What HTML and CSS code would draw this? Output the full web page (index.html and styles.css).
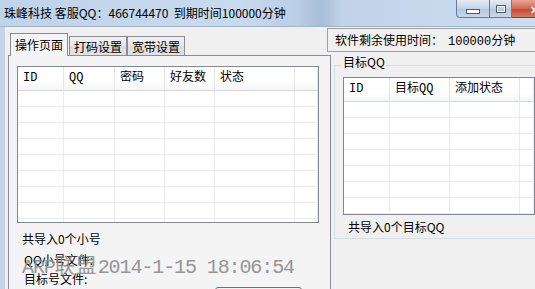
FILE: index.html
```html
<!DOCTYPE html>
<html lang="zh-CN">
<head>
    <meta charset="UTF-8">
    <title>珠峰科技</title>
    <link rel="stylesheet" href="styles.css">
</head>
<body>
    <div class="window">
        <div class="titlebar">
            <span class="title">珠峰科技 客服QQ：466744470&nbsp; 到期时间100000分钟</span>
            <div class="caption">
                <div class="cap-btn cap-min"><span class="glyph-min"></span></div>
                <div class="cap-btn cap-max"><span class="glyph-max"></span></div>
                <div class="cap-btn cap-close">✕</div>
            </div>
        </div>

        <div class="client">
            <div class="tabs-col">
                <div class="tabstrip">
                    <div class="tab active">操作页面</div>
                    <div class="tab">打码设置</div>
                    <div class="tab">宽带设置</div>
                </div>
                <div class="panel">
                    <div class="list list-main">
                        <table>
                            <colgroup>
                                <col style="width: 46px">
                                <col style="width: 51px">
                                <col style="width: 50px">
                                <col style="width: 50px">
                                <col style="width: 80px">
                                <col>
                            </colgroup>
                            <tr><th>ID</th><th>QQ</th><th>密码</th><th>好友数</th><th>状态</th><th></th></tr>
                            <tr><td></td><td></td><td></td><td></td><td></td><td></td></tr>
                            <tr><td></td><td></td><td></td><td></td><td></td><td></td></tr>
                            <tr><td></td><td></td><td></td><td></td><td></td><td></td></tr>
                            <tr><td></td><td></td><td></td><td></td><td></td><td></td></tr>
                            <tr><td></td><td></td><td></td><td></td><td></td><td></td></tr>
                            <tr><td></td><td></td><td></td><td></td><td></td><td></td></tr>
                            <tr><td></td><td></td><td></td><td></td><td></td><td></td></tr>
                            <tr><td></td><td></td><td></td><td></td><td></td><td></td></tr>
                            <tr><td></td><td></td><td></td><td></td><td></td><td></td></tr>
                        </table>
                    </div>
                    <div class="count-label">共导入0个小号</div>
                    <div class="file-label file-qq">QQ小号文件:</div>
                    <div class="file-label file-target">目标号文件:</div>
                    <div class="btn-row"><div class="btn"></div></div>
                </div>
            </div>

            <div class="side-col">
                <div class="timebox">软件剩余使用时间：<span class="time-val">100000分钟</span></div>
                <fieldset class="group">
                    <legend>目标QQ</legend>
                    <div class="list list-target">
                        <table>
                            <colgroup>
                                <col style="width: 46px">
                                <col style="width: 60px">
                                <col style="width: 70px">
                                <col>
                            </colgroup>
                            <tr><th>ID</th><th>目标QQ</th><th>添加状态</th><th></th></tr>
                            <tr><td></td><td></td><td></td><td></td></tr>
                            <tr><td></td><td></td><td></td><td></td></tr>
                            <tr><td></td><td></td><td></td><td></td></tr>
                            <tr><td></td><td></td><td></td><td></td></tr>
                            <tr><td></td><td></td><td></td><td></td></tr>
                            <tr><td></td><td></td><td></td><td></td></tr>
                            <tr><td></td><td></td><td></td><td></td></tr>
                            <tr><td></td><td></td><td></td><td></td></tr>
                        </table>
                    </div>
                    <div class="target-count">共导入0个目标QQ</div>
                </fieldset>
            </div>
        </div>

        <div class="watermark">ARP<span class="wm-cn">联盟</span>2014-1-15 18:06:54</div>
    </div>
</body>
</html>
```

FILE: styles.css
```css
body {
    margin: 0;
    background-color: #f0f0f0;
}
.window {
    position: relative;
    width: 535px;
    height: 289px;
    overflow: hidden;
    background-color: #f0f0f0;
    font-family: "Noto Sans CJK SC", sans-serif;
    font-size: 12px;
    color: #000;
}
.titlebar {
    display: flex;
    height: 26px;
    border-bottom: 1px solid #9fb3c9;
    background: linear-gradient(90deg, #bfd3e9 0%, #c8daee 45%, #b9cde4 56%, #a6bdd8 60%, #c0d3e9 64%, #cddef0 100%);
}
.title {
    padding-left: 4px;
    line-height: 26px;
    white-space: nowrap;
}
.caption {
    display: flex;
    align-self: flex-start;
    margin-left: auto;
    margin-right: -22px;
}
.cap-btn {
    height: 17px;
    border: 1px solid #6a7c93;
    border-top: none;
    display: flex;
    align-items: center;
    justify-content: center;
}
.cap-min {
    width: 32px;
    border-radius: 0 0 0 4px;
    background: linear-gradient(#e3ebf4, #c4d3e4 50%, #b2c5db 51%, #c9d8e9);
}
.cap-max {
    width: 21px;
    border-left: none;
    background: linear-gradient(#e3ebf4, #c4d3e4 50%, #b2c5db 51%, #c9d8e9);
}
.cap-close {
    width: 44px;
    border-left: none;
    border-color: #8a3b32;
    background: linear-gradient(#e8a493, #d5664f 50%, #c44530 51%, #d87a60);
    color: #fff;
    font-size: 11px;
    font-weight: bold;
}
.glyph-min {
    width: 12px;
    height: 3px;
    margin-top: 5px;
    background-color: #fff;
    border: 1px solid #4d5d72;
}
.glyph-max {
    width: 8px;
    height: 6px;
    border: 1px solid #4d5d72;
    box-shadow: inset 0 0 0 1px #fff;
}
.client {
    display: flex;
    height: 262px;
    border-left: 5px solid #c2d5e9;
    padding-left: 3px;
}
.tabs-col {
    display: flex;
    flex-direction: column;
    flex-shrink: 0;
    width: 323px;
    padding-top: 6px;
}
.tabstrip {
    display: flex;
    align-items: flex-end;
    height: 22px;
    padding-left: 2px;
    position: relative;
    z-index: 1;
}
.tab {
    height: 19px;
    padding: 0 4px;
    line-height: 19px;
    border: 1px solid #898c95;
    border-bottom: none;
    box-sizing: border-box;
    background: linear-gradient(#f2f2f2, #e6e6e6 50%, #dcdcdc 51%, #e2e2e2);
    white-space: nowrap;
}
.tab.active {
    height: 23px;
    line-height: 22px;
    margin-bottom: -1px;
    margin-right: 1px;
    background: #f4f4f4;
}
.panel {
    flex: 1;
    border: 1px solid #898c95;
    background-color: #f4f4f4;
    padding: 10px 11px 0 8px;
}
.list {
    border: 1px solid #828790;
    background-color: #fff;
    overflow: hidden;
    box-sizing: border-box;
}
.list-main {
    height: 157px;
}
.list-target {
    height: 138px;
    margin-top: 3px;
}
.list table {
    width: 100%;
    table-layout: fixed;
    border-collapse: separate;
    border-spacing: 0;
}
.list th {
    height: 24px;
    padding: 0 0 0 5px;
    box-sizing: border-box;
    text-align: left;
    font-weight: normal;
    font-family: "Liberation Mono", "Noto Sans CJK SC", monospace;
    font-size: 12px;
    line-height: 23px;
    border-right: 1px solid #e5e5e5;
    border-bottom: 1px solid #d5d5d5;
    background: linear-gradient(#fff, #fff 60%, #f5f6f7);
    white-space: nowrap;
    overflow: hidden;
}
.list td {
    height: 16px;
    padding: 0;
    box-sizing: border-box;
    line-height: 15px;
    border-right: 1px solid #ececec;
    border-bottom: 1px solid #ececec;
}
.count-label {
    margin-top: 8px;
    padding-left: 5px;
    line-height: 16px;
}
.file-label {
    padding-left: 7px;
    line-height: 16px;
}
.file-qq {
    margin-top: 5px;
}
.file-target {
    margin-top: 3px;
}
.btn-row {
    padding-left: 198px;
}
.btn {
    width: 85px;
    height: 22px;
    border: 1px solid #707070;
    border-radius: 3px;
    background: linear-gradient(#f2f2f2, #ebebeb 50%, #dddddd 51%, #cfcfcf);
}
.side-col {
    flex: 1;
    min-width: 0;
    margin-left: -4px;
    padding-top: 1px;
}
.timebox {
    height: 24px;
    box-sizing: border-box;
    border: 1px solid #a0a0a0;
    border-right: none;
    padding-left: 7px;
    line-height: 22px;
    white-space: nowrap;
}
.time-val {
    margin-left: 5px;
    font-family: "Liberation Mono", "Noto Sans CJK SC", monospace;
}
.group {
    margin: 4px 0 0 7px;
    padding: 0 0 5px 8px;
    border: 1px solid #d5dfe5;
    border-right: none;
    min-width: 0;
}
.group legend {
    padding: 0 1px 6px 1px;
    margin-left: -1px;
    line-height: 12px;
    font-family: "Noto Sans CJK SC", sans-serif;
}
.target-count {
    margin-top: 6px;
    padding-left: 5px;
    line-height: 12px;
}
.watermark {
    position: absolute;
    left: 22px;
    top: 258px;
    font-family: "Liberation Mono", "Noto Sans CJK SC", monospace;
    font-size: 20px;
    line-height: 20px;
    letter-spacing: -1.1px;
    color: #8c8c8c;
    white-space: nowrap;
    opacity: 0.9;
}
.wm-cn {
    letter-spacing: 1.5px;
}
```
